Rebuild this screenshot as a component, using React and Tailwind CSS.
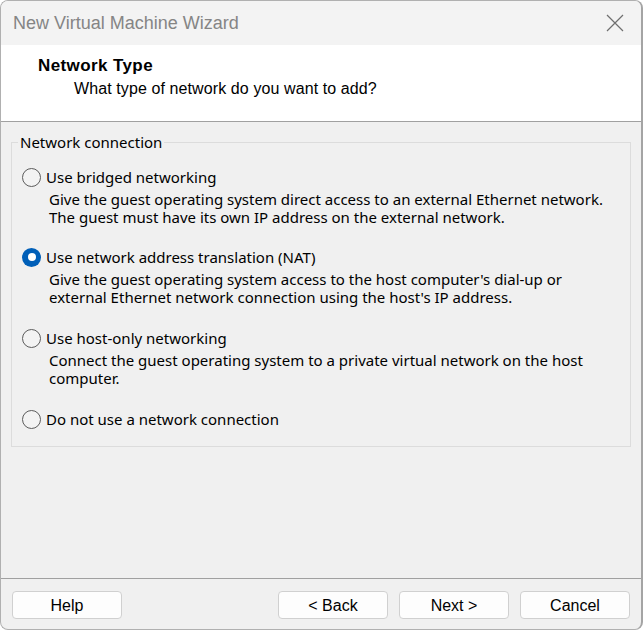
import React from 'react';

const ui = { fontFamily: '"Noto Sans", "Open Sans", sans-serif' };
const narrow = { fontFamily: '"Liberation Sans", Arial, sans-serif' };

const options = [
  {
    label: 'Use bridged networking',
    desc: [
      'Give the guest operating system direct access to an external Ethernet network.',
      'The guest must have its own IP address on the external network.',
    ],
  },
  {
    label: 'Use network address translation (NAT)',
    desc: [
      "Give the guest operating system access to the host computer's dial-up or",
      "external Ethernet network connection using the host's IP address.",
    ],
    checked: true,
  },
  {
    label: 'Use host-only networking',
    desc: [
      'Connect the guest operating system to a private virtual network on the host',
      'computer.',
    ],
  },
  { label: 'Do not use a network connection', desc: [] },
];

function Radio({ checked }) {
  if (checked) {
    return (
      <span className="flex items-center justify-center w-[19px] h-[19px] rounded-full bg-[#005fb8] shrink-0">
        <span className="w-[8px] h-[8px] rounded-full bg-white" />
      </span>
    );
  }
  return <span className="w-[19px] h-[19px] rounded-full border border-[#5c5c5c] bg-[#f3f3f3] shrink-0" />;
}

function Option({ label, desc, checked, spacing }) {
  return (
    <div className={spacing}>
      <div className="flex items-center h-[20px] pl-[2px]">
        <Radio checked={checked} />
        <span className="ml-[5px] text-[15px] text-black leading-[20px]">{label}</span>
      </div>
      {desc.length > 0 && (
        <div className="mt-[3px] pl-[29px] text-[15px] leading-[18px] text-black">
          {desc.map((d) => (
            <div key={d}>{d}</div>
          ))}
        </div>
      )}
    </div>
  );
}

function Button({ children }) {
  return (
    <button
      className="h-[28px] w-[110px] pt-[1px] rounded-[4px] border border-[#d0d0d0] bg-[#fdfdfd] text-[16px] text-black"
      style={narrow}
    >
      {children}
    </button>
  );
}

const spacings = ['mb-[21px]', 'mb-[22px]', 'mb-[22px]', ''];

export default function App() {
  return (
    <div className="w-[643px] h-[630px] bg-white">
      <div className="w-full h-full flex flex-col rounded-[8px] border border-[#b0b0b0] border-r-2 border-r-[#a4a4a4] overflow-hidden bg-[#f0f0f0]">
        {/* title bar */}
        <div className="h-[44px] bg-[#f3f3f3] flex items-center justify-between pl-[12px] pr-[16px] shrink-0">
          <span className="text-[18px] text-[#858585] pt-[1px]" style={narrow}>
            New Virtual Machine Wizard
          </span>
          <svg width="18" height="18" viewBox="0 0 18 18" className="mr-[1px]">
            <path d="M1 1 L17 17 M17 1 L1 17" stroke="#6f6f6f" strokeWidth="1.2" fill="none" />
          </svg>
        </div>

        {/* header */}
        <div className="h-[77px] bg-white border-b border-[#a0a0a0] pt-[11px] shrink-0" style={narrow}>
          <div className="pl-[37px] text-[17px] font-bold leading-[20px] tracking-[0.4px] text-black">Network Type</div>
          <div className="pl-[73px] text-[16px] leading-[20px] tracking-[0.1px] text-black mt-[3px]">
            What type of network do you want to add?
          </div>
        </div>

        {/* body */}
        <div className="flex-1 pt-[10px] px-[10px]" style={ui}>
          <fieldset className="border border-[#dcdcdc] px-[8px] pb-[17px]">
            <legend className="px-[2px] -ml-[2px] text-[15px] leading-[20px] text-black">Network connection</legend>
            <div className="mt-[15px]">
              {options.map((o, i) => (
                <Option key={o.label} {...o} spacing={spacings[i]} />
              ))}
            </div>
          </fieldset>
        </div>

        {/* footer */}
        <div className="h-[51px] border-t border-[#a0a0a0] flex items-start pt-[12px] px-[11px] shrink-0">
          <Button>Help</Button>
          <div className="flex-1" />
          <div className="flex gap-[11px]">
            <Button>&lt; Back</Button>
            <Button>Next &gt;</Button>
            <Button>Cancel</Button>
          </div>
        </div>
      </div>
    </div>
  );
}
